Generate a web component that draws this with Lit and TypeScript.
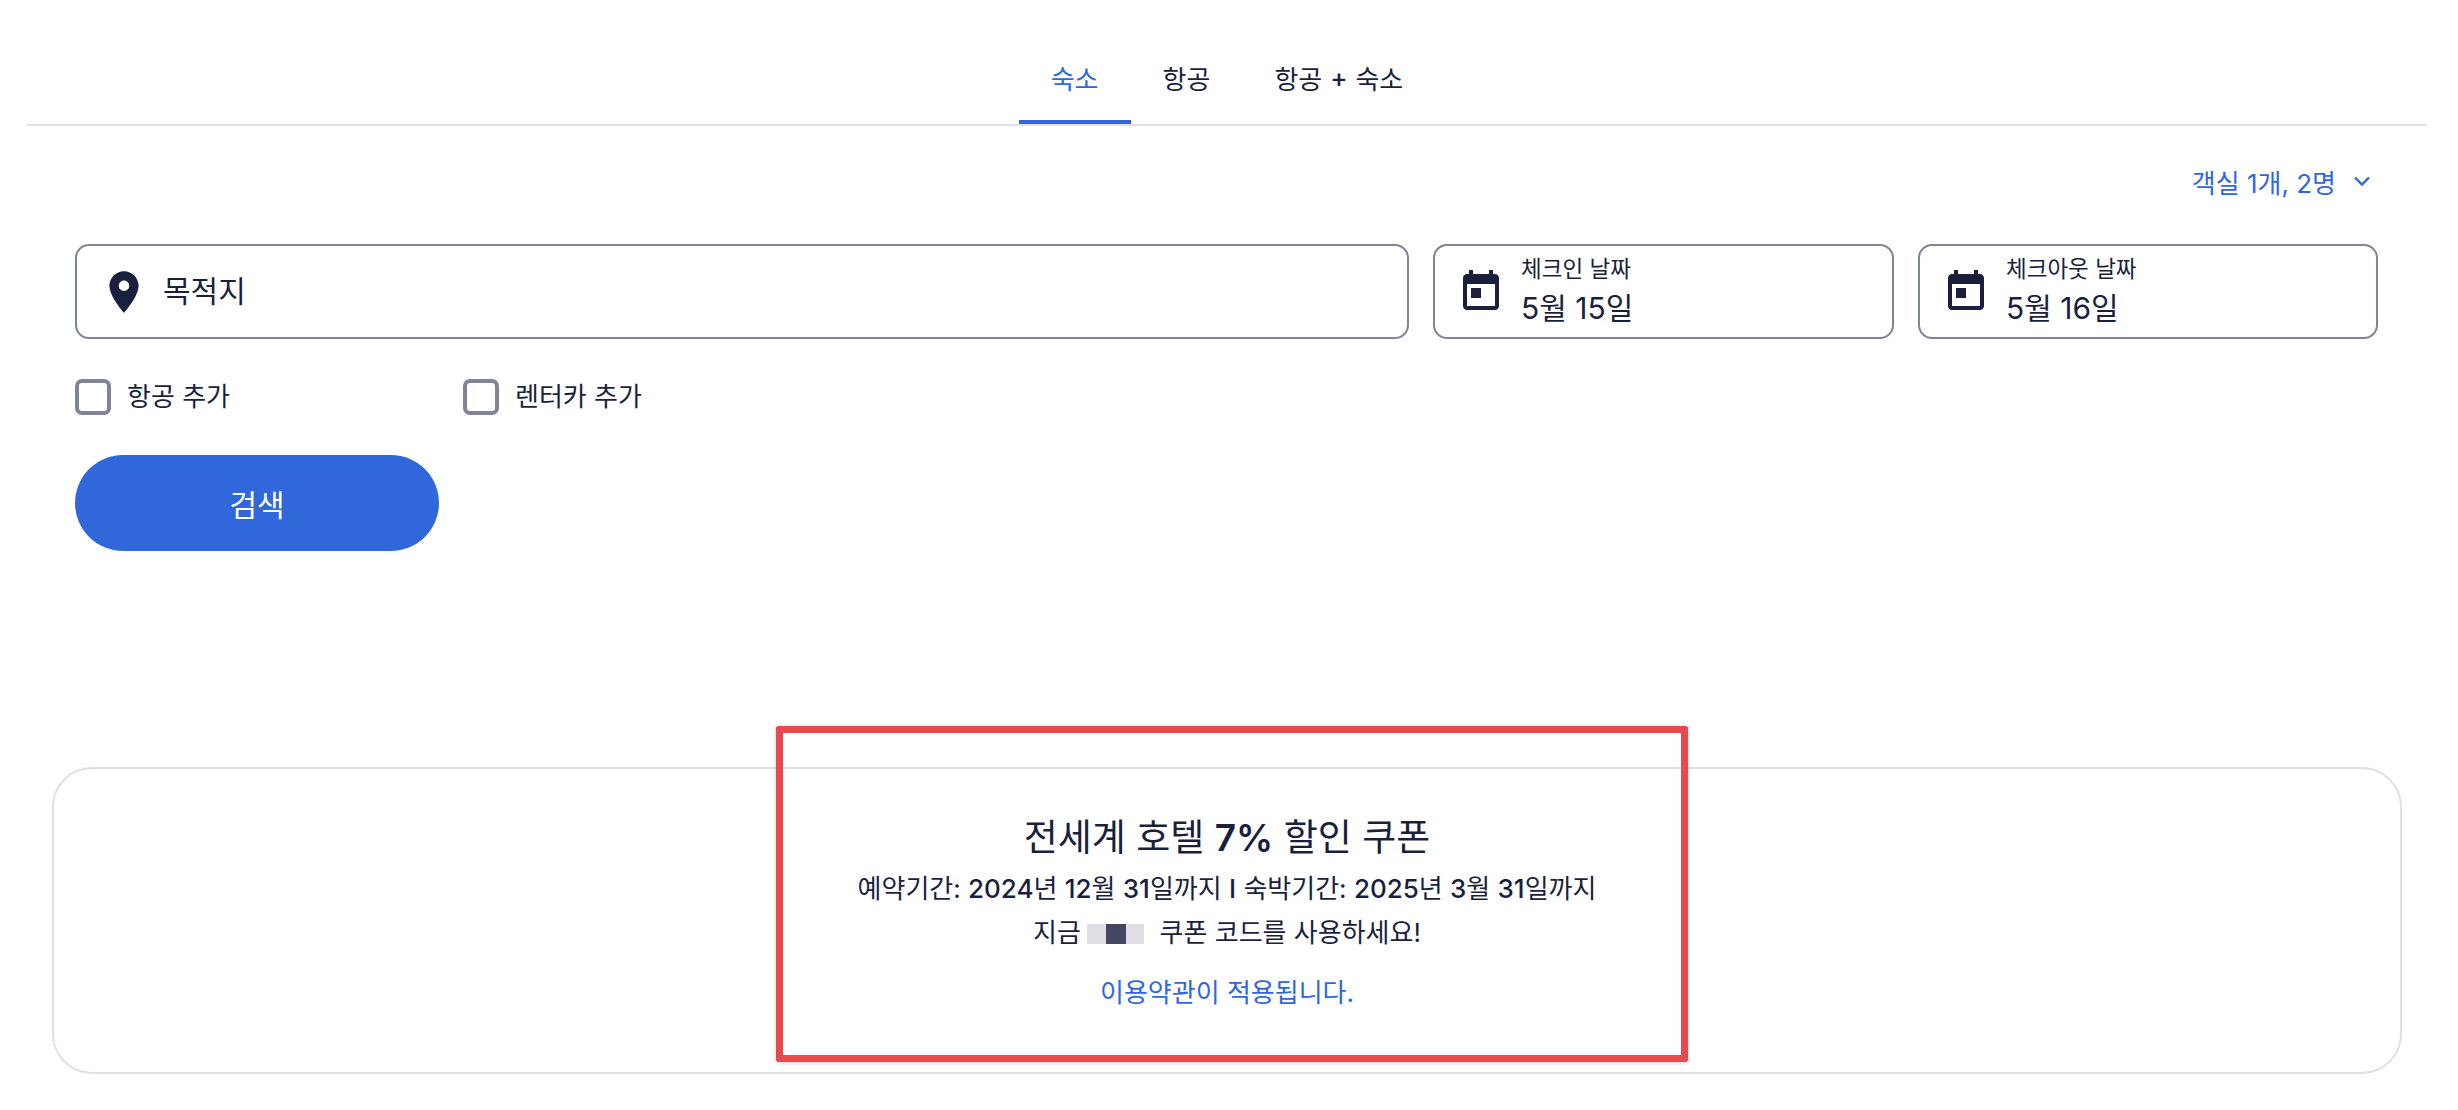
import { html, LitElement, css } from 'lit';
import { customElement } from 'lit/decorators.js';

const calendar = html`<svg class="cal" viewBox="0 0 24 24"><path fill="currentColor" fill-rule="evenodd" d="M7 10h5v5H7zM16 1v2H8V1H6v2H5C3.89 3 3 3.9 3 5v14c0 1.1.89 2 2 2h14c1.1 0 2-.9 2-2V5c0-1.1-.9-2-2-2h-1V1h-2zm3 18H5V8h14v11z"/></svg>`;

@customElement('app-root')
export class AppRoot extends LitElement {
  static styles = css`
    :host {
      display: block;
      width: 2458px;
      height: 1110px;
      background: #fff;
      color: #1a1f3d;
      font-family: Inter, 'Noto Sans CJK KR', sans-serif;
      font-size: 26px;
      overflow: hidden;
    }
    .n {
      font-weight: 500;
    }
    .b {
      font-weight: 600;
    }
    .tabs {
      display: flex;
      justify-content: center;
      margin: 32px 31px 0 27px;
      border-bottom: 2px solid #dfdfe5;
    }
    .tab {
      padding: 2px 32px 0;
      height: 92px;
      box-sizing: border-box;
      display: flex;
      align-items: center;
      justify-content: center;
      border-bottom: 4px solid transparent;
    }
    .tab.active {
      color: #3067db;
      border-bottom-color: #3067db;
    }
    .plus {
      font-weight: 500;
      padding: 0 1px;
    }
    .form {
      padding: 35px 80px 0 75px;
    }
    .rooms {
      display: flex;
      justify-content: flex-end;
      align-items: center;
      gap: 16px;
      color: #3067db;
      height: 40px;
      padding-right: 6px;
    }
    .chev {
      width: 20px;
      height: 20px;
    }
    .fields {
      display: grid;
      grid-template-columns: 1fr 461px 460px;
      gap: 24px;
      margin-top: 43px;
    }
    .field {
      height: 95px;
      box-sizing: border-box;
      border: 2px solid #818494;
      border-radius: 14px;
      display: flex;
      align-items: center;
    }
    .dest {
      padding-left: 22px;
      gap: 14px;
      font-size: 30px;
    }
    .dest span {
      margin-bottom: 5px;
    }
    .pin {
      width: 50px;
      height: 50px;
      flex: none;
    }
    .date {
      padding-left: 22px;
      gap: 16px;
    }
    .cal {
      width: 48px;
      height: 48px;
      flex: none;
    }
    .date-text {
      display: flex;
      flex-direction: column;
    }
    .date-label {
      font-size: 22.5px;
      line-height: 33px;
    }
    .date-value {
      font-size: 30px;
      line-height: 46px;
    }
    .checks {
      display: flex;
      height: 36px;
      margin-top: 40px;
    }
    .check {
      display: flex;
      align-items: center;
      gap: 16px;
      width: 388px;
      line-height: 34px;
    }
    .box {
      width: 36px;
      height: 36px;
      box-sizing: border-box;
      border: 4px solid #818494;
      border-radius: 7px;
    }
    .search {
      display: flex;
      align-items: center;
      justify-content: center;
      width: 364px;
      height: 96px;
      margin-top: 40px;
      border-radius: 48px;
      background: #3067db;
      color: #fff;
      font-size: 30px;
    }
    .coupon {
      position: relative;
      box-sizing: border-box;
      height: 307px;
      margin: 216px 56px 0 52px;
      border: 2px solid #dfdfe5;
      border-radius: 40px;
      display: flex;
      flex-direction: column;
      align-items: center;
      padding-top: 39px;
      text-align: center;
    }
    .coupon-title {
      font-size: 37px;
      line-height: 59px;
    }
    .coupon-line {
      line-height: 44px;
    }
    .mask {
      display: inline-flex;
      width: 57px;
      height: 20px;
      margin: 0 8px 0 -1px;
      vertical-align: -2px;
      background: #dfdfe5;
      justify-content: center;
    }
    .mask i {
      display: block;
      width: 20px;
      background: #44465f;
    }
    .terms {
      color: #3067db;
      margin-top: 18px;
      line-height: 40px;
    }
    .highlight {
      position: absolute;
      left: 722px;
      top: -43px;
      width: 912px;
      height: 336px;
      box-sizing: border-box;
      border: 7px solid #e8494e;
      border-radius: 2px;
      box-shadow: 0 1px 4px rgba(0, 0, 0, 0.2);
    }
  `;

  render() {
    return html`
      <div class="tabs">
        <div class="tab active">숙소</div>
        <div class="tab">항공</div>
        <div class="tab">항공 <span class="plus">&nbsp;+&nbsp;</span> 숙소</div>
      </div>
      <div class="form">
        <div class="rooms">
          <span>객실 1개, 2명</span>
          <svg class="chev" viewBox="0 0 20 20"><path fill="none" stroke="currentColor" stroke-width="2.4" d="M3 6.5l7 7 7-7"/></svg>
        </div>
        <div class="fields">
          <div class="field dest">
            <svg class="pin" viewBox="0 0 24 24"><path fill="currentColor" d="M12 2C8.13 2 5 5.13 5 9c0 5.25 7 13 7 13s7-7.75 7-13c0-3.87-3.13-7-7-7zm0 9.5c-1.38 0-2.5-1.12-2.5-2.5s1.12-2.5 2.5-2.5 2.5 1.12 2.5 2.5-1.12 2.5-2.5 2.5z"/></svg>
            <span>목적지</span>
          </div>
          <div class="field date">
            ${calendar}
            <div class="date-text">
              <span class="date-label">체크인 날짜</span>
              <span class="date-value">5월 15일</span>
            </div>
          </div>
          <div class="field date">
            ${calendar}
            <div class="date-text">
              <span class="date-label">체크아웃 날짜</span>
              <span class="date-value">5월 16일</span>
            </div>
          </div>
        </div>
        <div class="checks">
          <label class="check"><span class="box"></span>항공 추가</label>
          <label class="check"><span class="box"></span>렌터카 추가</label>
        </div>
        <div class="search">검색</div>
      </div>
      <div class="coupon">
        <div class="coupon-title">전세계 호텔 <span class="b">7%</span> 할인 쿠폰</div>
        <div class="coupon-line">예약기간: <span class="n">2024</span>년 <span class="n">12</span>월 <span class="n">31</span>일까지 <span class="n">I</span> 숙박기간: <span class="n">2025</span>년 <span class="n">3</span>월 <span class="n">31</span>일까지</div>
        <div class="coupon-line">지금 <span class="mask"><i></i></span> 쿠폰 코드를 사용하세요!</div>
        <div class="terms">이용약관이 적용됩니다.</div>
        <div class="highlight"></div>
      </div>
    `;
  }
}
